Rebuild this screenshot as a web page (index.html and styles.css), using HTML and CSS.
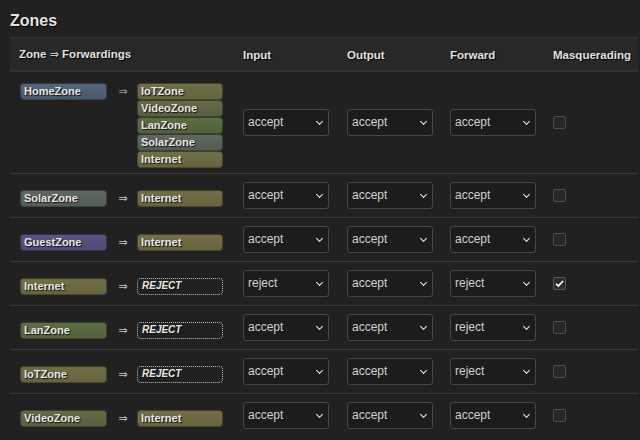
FILE: index.html
```html
<!DOCTYPE html>
<html>
<head>
<meta charset="utf-8">
<link rel="stylesheet" href="styles.css">
</head>
<body>
<h2 class="title">Zones</h2>
<table class="zones">
  <colgroup>
    <col class="c-zone"><col class="c-in"><col class="c-pol"><col class="c-pol"><col class="c-masq">
  </colgroup>
  <thead>
    <tr><th>Zone <span class="harrow">⇒</span> Forwardings</th><th>Input</th><th>Output</th><th>Forward</th><th>Masquerading</th></tr>
  </thead>
  <tbody>
    <tr class="first">
      <td class="zcell"><div class="zwrap"><span class="badge home">HomeZone</span><span class="arrow">⇒</span><div class="fwd"><span class="badge iot">IoTZone</span><span class="badge video">VideoZone</span><span class="badge lan">LanZone</span><span class="badge solar">SolarZone</span><span class="badge inet">Internet</span></div></div></td>
      <td><span class="sel">accept</span></td><td><span class="sel">accept</span></td><td><span class="sel">accept</span></td>
      <td><span class="cb"></span></td>
    </tr>
    <tr>
      <td class="zcell"><div class="zwrap"><span class="badge solar">SolarZone</span><span class="arrow">⇒</span><div class="fwd"><span class="badge inet">Internet</span></div></div></td>
      <td><span class="sel">accept</span></td><td><span class="sel">accept</span></td><td><span class="sel">accept</span></td>
      <td><span class="cb"></span></td>
    </tr>
    <tr>
      <td class="zcell"><div class="zwrap"><span class="badge guest">GuestZone</span><span class="arrow">⇒</span><div class="fwd"><span class="badge inet">Internet</span></div></div></td>
      <td><span class="sel">accept</span></td><td><span class="sel">accept</span></td><td><span class="sel">accept</span></td>
      <td><span class="cb"></span></td>
    </tr>
    <tr>
      <td class="zcell"><div class="zwrap"><span class="badge inet">Internet</span><span class="arrow">⇒</span><div class="fwd"><span class="badge reject">REJECT</span></div></div></td>
      <td><span class="sel">reject</span></td><td><span class="sel">accept</span></td><td><span class="sel">reject</span></td>
      <td><span class="cb checked"><svg viewBox="0 0 13 13" width="13" height="13"><path d="M3 6.8 L5.4 9 L10 4" fill="none" stroke="#fff" stroke-width="1.8"/></svg></span></td>
    </tr>
    <tr>
      <td class="zcell"><div class="zwrap"><span class="badge lan">LanZone</span><span class="arrow">⇒</span><div class="fwd"><span class="badge reject">REJECT</span></div></div></td>
      <td><span class="sel">accept</span></td><td><span class="sel">accept</span></td><td><span class="sel">reject</span></td>
      <td><span class="cb"></span></td>
    </tr>
    <tr>
      <td class="zcell"><div class="zwrap"><span class="badge iot">IoTZone</span><span class="arrow">⇒</span><div class="fwd"><span class="badge reject">REJECT</span></div></div></td>
      <td><span class="sel">accept</span></td><td><span class="sel">accept</span></td><td><span class="sel">reject</span></td>
      <td><span class="cb"></span></td>
    </tr>
    <tr>
      <td class="zcell"><div class="zwrap"><span class="badge video">VideoZone</span><span class="arrow">⇒</span><div class="fwd"><span class="badge inet">Internet</span></div></div></td>
      <td><span class="sel">accept</span></td><td><span class="sel">accept</span></td><td><span class="sel">accept</span></td>
      <td><span class="cb"></span></td>
    </tr>
  </tbody>
</table>
</body>
</html>
```
FILE: styles.css
```css
html, body {
  margin: 0;
  padding: 0;
  background: #212121;
  color: #ddd;
  font-family: "Liberation Sans", Arial, sans-serif;
  font-size: 12px;
  overflow: hidden;
}
.title {
  margin: 0 0 6px 0;
  padding: 11px 10px 0;
  font-size: 16px;
  line-height: 20px;
  font-weight: bold;
  color: #e4e4e4;
  text-shadow: 1px 1px 1px #000;
}
.zones {
  margin-left: 10px;
  width: 628px;
  border-collapse: collapse;
  table-layout: fixed;
}
.c-zone { width: 223px; }
.c-in { width: 104px; }
.c-pol { width: 103px; }
.c-masq { width: 95px; }
.zones th {
  text-align: left;
  font-weight: bold;
  font-size: 11.5px;
  line-height: 14px;
  padding: 9px 10px 8px 10px;
  background: #282828;
  border-top: 1px solid #353535;
  border-bottom: 2px solid #333;
  color: #e0e0e0;
  text-shadow: 1px 1px 1px #000;
  white-space: nowrap;
}
.zones th:first-child { padding-left: 9px; }
.harrow {
  font-family: "DejaVu Sans", sans-serif;
  font-size: 11px;
  font-weight: normal;
}
.zones td {
  padding: 8px 10px;
  vertical-align: middle;
  border-bottom: 1px solid #3a3a3a;
}
.zones tr:last-child td { border-bottom: none; }
.zones td.zcell {
  padding: 11px 10px 5px 10px;
}
.zwrap {
  display: flex;
  align-items: flex-start;
}
.arrow {
  flex: 1;
  text-align: center;
  font-family: "DejaVu Sans", sans-serif;
  font-size: 11px;
  line-height: 17px;
  color: #c8c8c8;
  padding-left: 2px;
}
.first .arrow { color: #9a9a9a; }
.fwd {
  display: flex;
  flex-direction: column;
  width: 86px;
}
.badge {
  display: block;
  box-sizing: border-box;
  height: 17px;
  line-height: 15px;
  padding: 0 3px;
  border: 1px solid rgba(0,0,0,0.35);
  border-radius: 4px;
  color: #e6e6e6;
  font-weight: bold;
  font-size: 11px;
  text-shadow: 1px 1px 1px #111;
  white-space: nowrap;
  overflow: hidden;
}
.zwrap > .badge { width: 87px; }
.home  { background: linear-gradient(#55657a, #4a596c); }
.iot   { background: linear-gradient(#6f6e47, #64633e); }
.video { background: linear-gradient(#646a48, #5a603f); }
.lan   { background: linear-gradient(#5b6d45, #51623c); }
.solar { background: linear-gradient(#5e6860, #535c55); }
.inet  { background: linear-gradient(#716f47, #66643e); }
.guest { background: linear-gradient(#5a5383, #4f4976); }
.reject {
  background: transparent;
  border: 1px dotted #bbb;
  font-style: italic;
  font-weight: bold;
  font-size: 10px;
  line-height: 11px;
  padding: 1px 4px 0;
  color: #e8e8e8;
}
.sel {
  display: block;
  position: relative;
  box-sizing: border-box;
  width: 86px;
  height: 27px;
  line-height: 25px;
  padding: 0 4px;
  border: 1px solid #474747;
  border-radius: 3px;
  background: #1c1c1c;
  color: #d0d0d0;
  font-size: 12px;
}
.sel::after {
  content: "";
  position: absolute;
  right: 6px;
  top: 9px;
  width: 4px;
  height: 4px;
  border-right: 1.6px solid #eee;
  border-bottom: 1.6px solid #eee;
  transform: rotate(45deg);
}
.cb {
  display: block;
  box-sizing: border-box;
  width: 13px;
  height: 13px;
  border: 1px solid #4e4e4e;
  border-radius: 2px;
  background: #282828;
  margin-top: -1px;
}
.cb svg { display: block; margin: -1px; }
.cb.checked { background: #2c2c2c; border-color: #5a5a5a; }
```
